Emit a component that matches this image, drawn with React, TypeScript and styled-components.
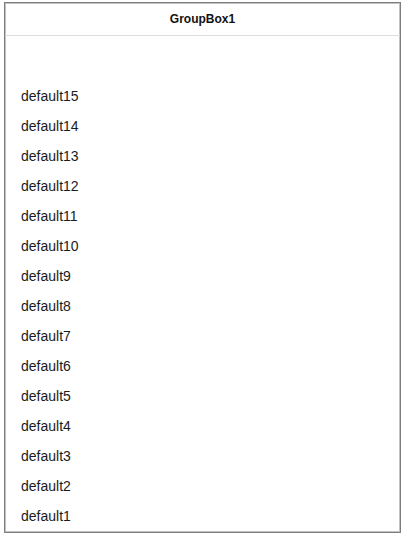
import React from 'react';
import styled, { createGlobalStyle } from 'styled-components';

const GlobalStyle = createGlobalStyle`
  html, body {
    margin: 0;
    padding: 0;
    background: #ffffff;
    font-family: "Liberation Sans", Arial, sans-serif;
  }
`;

const GroupBox = styled.div`
  box-sizing: border-box;
  margin: 2px 0 0 4px;
  width: 397px;
  height: 531px;
  border: 1px solid #7d7d7d;
  box-shadow: inset 0 0 0 1px #c2c2c2;
  display: flex;
  flex-direction: column;
  background: #ffffff;
`;

const Header = styled.div`
  height: 32px;
  flex: none;
  display: flex;
  align-items: center;
  justify-content: center;
  border-bottom: 1px solid #dedede;
  font-size: 12px;
  font-weight: bold;
  color: #111111;
`;

const List = styled.div`
  flex: 1;
  display: flex;
  flex-direction: column;
  justify-content: flex-end;
  padding-bottom: 1px;
`;

const Item = styled.div`
  height: 30px;
  line-height: 30px;
  padding-left: 16px;
  font-size: 14px;
  color: #1b1b1b;
`;

const items = Array.from({ length: 15 }, (_, i) => `default${15 - i}`);

const App: React.FC = () => {
  return (
    <>
      <GlobalStyle />
      <GroupBox>
        <Header>GroupBox1</Header>
        <List>
          {items.map((label) => (
            <Item key={label}>{label}</Item>
          ))}
        </List>
      </GroupBox>
    </>
  );
};

export default App;
